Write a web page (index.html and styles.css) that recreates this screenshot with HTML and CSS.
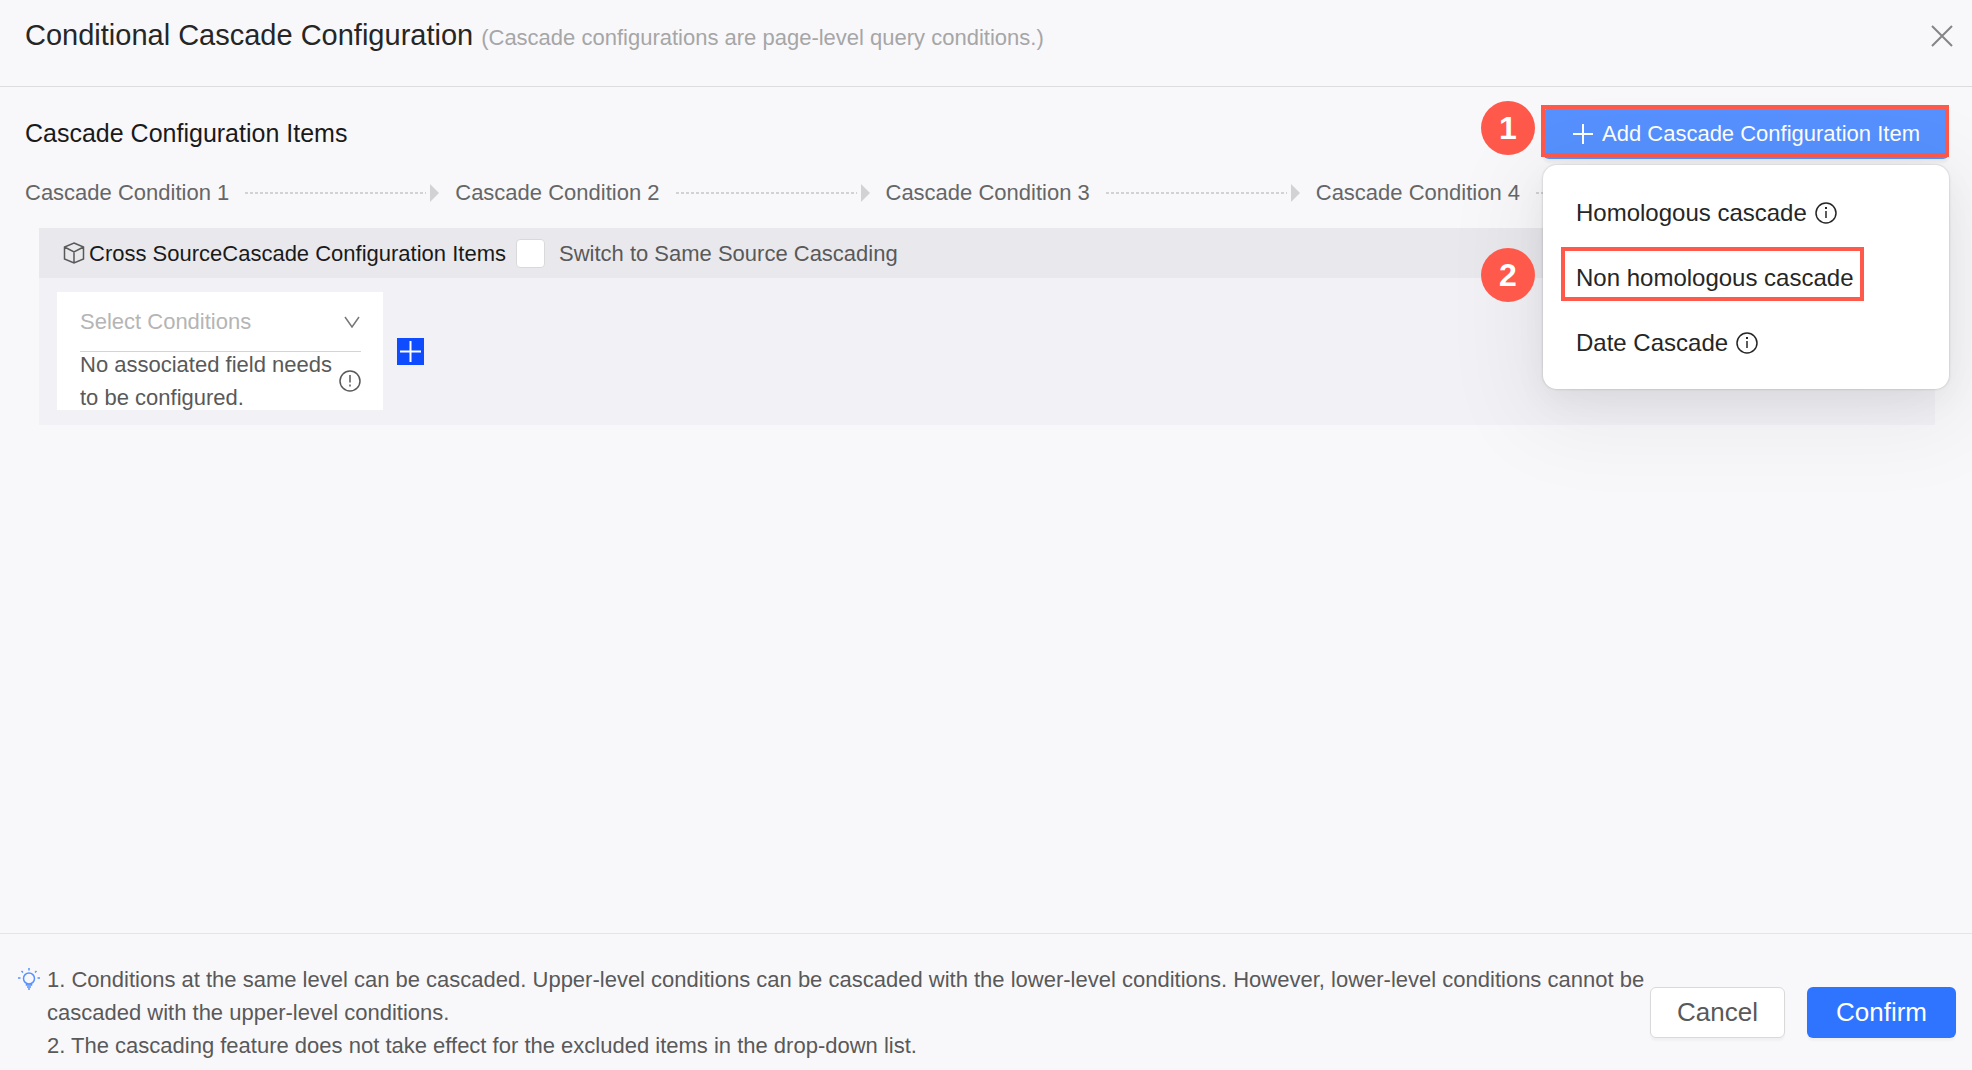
FILE: index.html
```html
<!DOCTYPE html>
<html lang="en">
<head>
    <meta charset="UTF-8">
    <title>Conditional Cascade Configuration</title>
    <link rel="stylesheet" href="styles.css">
</head>
<body>
    <div class="dialog">
        <header class="dialog-header">
            <h1>Conditional Cascade Configuration</h1>
            <span class="subtitle">(Cascade configurations are page-level query conditions.)</span>
            <button type="button" class="close" aria-label="Close">
                <svg width="22" height="22" viewBox="0 0 22 22"><path d="M1 1L21 21M21 1L1 21"/></svg>
            </button>
        </header>

        <main class="dialog-body">
            <div class="section-bar">
                <h2>Cascade Configuration Items</h2>
                <div class="add-wrapper">
                    <span class="badge badge-one">1</span>
                    <button type="button" class="add-button">
                        <svg width="22" height="22" viewBox="0 0 22 22"><path d="M11 1V21M1 11H21"/></svg>
                        Add Cascade Configuration Item
                    </button>
                    <!-- dropdown -->
                    <div class="menu">
                        <span class="badge badge-two">2</span>
                        <button type="button" class="menu-item">Homologous cascade
                            <svg width="22" height="22" viewBox="0 0 22 22"><circle cx="11" cy="11" r="10"/><path d="M11 9V16"/><path class="dot" d="M11 5V7"/></svg>
                        </button>
                        <button type="button" class="menu-item marked">Non homologous cascade</button>
                        <button type="button" class="menu-item">Date Cascade
                            <svg width="22" height="22" viewBox="0 0 22 22"><circle cx="11" cy="11" r="10"/><path d="M11 9V16"/><path class="dot" d="M11 5V7"/></svg>
                        </button>
                    </div>
                </div>
            </div>

            <div class="steps">
                <div class="step">Cascade Condition 1<span class="line"></span><span class="arrow"></span></div>
                <div class="step">Cascade Condition 2<span class="line"></span><span class="arrow"></span></div>
                <div class="step">Cascade Condition 3<span class="line"></span><span class="arrow"></span></div>
                <div class="step">Cascade Condition 4<span class="line"></span><span class="arrow"></span></div>
            </div>

            <section class="panel">
                <div class="panel-header">
                    <svg class="cube" width="22" height="22" viewBox="0 0 22 22"><path d="M11 1L20.500 5V17L11 21L1.500 17V5ZM1.500 5L11 10L20.500 5M11 10V21"/></svg>
                    <h3>Cross SourceCascade Configuration Items</h3>
                    <input type="checkbox" id="sameSource">
                    <label for="sameSource">Switch to Same Source Cascading</label>
                </div>
                <div class="panel-content">
                    <div class="card">
                        <div class="select-wrapper">
                            <select id="conditions" aria-label="Select Conditions">
                                <option>Select Conditions</option>
                            </select>
                            <svg class="chevron" width="18" height="12" viewBox="0 0 18 12"><path d="M2 1L9 11L16 1"/></svg>
                        </div>
                        <div class="note">
                            <p>No associated field needs to be configured.</p>
                            <svg width="22" height="22" viewBox="0 0 22 22"><circle cx="11" cy="11" r="10"/><path d="M11 5V12.500M11 14.500V16.500"/></svg>
                        </div>
                    </div>
                    <button type="button" class="plus-button" aria-label="Add condition">
                        <svg width="21" height="21" viewBox="0 0 21 21"><path d="M10.500 0V21M0 10.500H21"/></svg>
                    </button>
                </div>
            </section>
        </main>

        <footer class="dialog-footer">
            <svg class="bulb" width="22" height="22" viewBox="0 0 22 22"><circle cx="11" cy="10.500" r="5.500"/><path d="M8.500 15.500V17H13.500V15.500M9 19H13M10 21H12M11 0V2.500M0 10H2.500M19.500 10H22M3.500 3L5 4.500M18.500 3L17 4.500"/></svg>
            <div class="tips">
                <p>1. Conditions at the same level can be cascaded. Upper-level conditions can be cascaded with the lower-level conditions. However, lower-level conditions cannot be cascaded with the upper-level conditions.</p>
                <p>2. The cascading feature does not take effect for the excluded items in the drop-down list.</p>
            </div>
            <div class="actions">
                <button type="button" class="cancel">Cancel</button>
                <button type="button" class="confirm">Confirm</button>
            </div>
        </footer>
    </div>
</body>
</html>
```
FILE: styles.css
```css
* {
    box-sizing: border-box;
}
body {
    margin: 0;
    font-family: "Liberation Sans", Arial, sans-serif;
    font-size: 22px;
    line-height: 33px;
    color: #595959;
    background-color: #f8f8fb;
}
h1, h2, h3, p {
    margin: 0;
    font-weight: normal;
}
button {
    padding: 0;
    border: none;
    background: none;
    font-family: inherit;
    font-size: inherit;
    color: inherit;
    cursor: pointer;
}
svg {
    flex: none;
    display: block;
    fill: none;
    stroke: currentColor;
    stroke-width: 2;
}
.dialog {
    display: flex;
    flex-direction: column;
    min-height: 100vh;
    overflow: hidden;
}

/* header */
.dialog-header {
    display: flex;
    align-items: baseline;
    gap: 8px;
    padding: 18px 19px 32px 25px;
    border-bottom: 1px solid #dcdcdf;
}
h1 {
    font-size: 29px;
    line-height: 34px;
    color: #262626;
}
.subtitle {
    color: #a6a6a6;
}
.close {
    align-self: center;
    margin-left: auto;
    color: #858585;
}

/* body */
.dialog-body {
    flex: 1;
    padding: 21px 23px 40px 25px;
}
.section-bar {
    display: flex;
    justify-content: space-between;
    align-items: center;
}
h2 {
    font-size: 25px;
    color: #1a1a1a;
}
.add-wrapper {
    position: relative;
    z-index: 2;
    width: 406px;
}
.add-button {
    position: relative;
    display: flex;
    justify-content: center;
    align-items: center;
    gap: 8px;
    width: 100%;
    height: 51px;
    border-radius: 6px;
    background-color: #5691ff;
    box-shadow: 0 4px 2px rgba(0, 0, 0, 0.04);
    color: white;
}
.add-button::after {
    content: "";
    position: absolute;
    inset: -3px 0 2px -2px;
    border: 4px solid #ff594b;
}
.badge {
    position: absolute;
    width: 54px;
    height: 54px;
    border-radius: 50%;
    background-color: #ff594b;
    color: white;
    font-size: 32px;
    font-weight: bold;
    line-height: 54px;
    text-align: center;
}
.badge-one {
    top: -7px;
    left: -62px;
}
.badge-two {
    top: 83px;
    left: -62px;
}
.menu {
    position: absolute;
    top: 57px;
    left: 0;
    width: 100%;
    padding: 15px 33px 14px;
    border-radius: 14px;
    background-color: white;
    box-shadow: 0 0 2px 1px rgba(0, 0, 0, 0.1), 0 12px 32px rgba(0, 0, 0, 0.05), 0 18px 90px 20px rgba(0, 0, 0, 0.06);
}
.menu-item {
    position: relative;
    display: flex;
    align-items: center;
    gap: 8px;
    height: 65px;
    font-size: 24px;
    color: #262626;
}
.menu-item svg {
    stroke-width: 1.5;
}
.menu-item .dot {
    stroke-width: 2;
}
.marked::after {
    content: "";
    position: absolute;
    inset: 2px -10px 9px -15px;
    border: 4px solid #ff594b;
}

.steps {
    display: flex;
    gap: 16px;
    margin-top: 18px;
    line-height: 32px;
    color: #666;
}
.step {
    display: flex;
    align-items: center;
    gap: 4px;
    white-space: nowrap;
}
.line {
    width: 181px;
    height: 2px;
    margin-left: 12px;
    background: repeating-linear-gradient(to right, #d2d2d4 0 3px, transparent 3px 5px);
}
.arrow {
    border: 9px solid transparent;
    border-left-color: #d2d2d4;
    border-right: none;
}

.panel {
    margin: 19px 14px 0;
    background-color: #f1f1f6;
}
.panel-header {
    display: flex;
    align-items: center;
    height: 50px;
    padding-left: 24px;
    background-color: #e9e9ed;
}
.cube {
    stroke-width: 1.5;
}
h3 {
    margin: 0 10px 0 4px;
    font-size: 22px;
    color: #1a1a1a;
}
input[type="checkbox"] {
    appearance: none;
    width: 29px;
    height: 29px;
    margin: 0 14px 0 0;
    border: 1px solid #d9d9d9;
    border-radius: 4px;
    background-color: white;
}
.panel-content {
    display: flex;
    align-items: center;
    gap: 14px;
    padding: 14px 18px 15px;
}
.card {
    width: 326px;
    height: 118px;
    padding: 0 22px 0 23px;
    background-color: white;
}
.select-wrapper {
    display: flex;
    align-items: center;
    height: 60px;
    border-bottom: 1px solid #d4d4d4;
}
select {
    flex: 1;
    appearance: none;
    padding: 0;
    border: none;
    background: none;
    font-family: inherit;
    font-size: 22px;
    color: #b5b5b5;
}
.chevron {
    color: #777;
    stroke-width: 1.5;
}
.note {
    display: flex;
    justify-content: space-between;
    align-items: center;
    height: 58px;
}
.note p {
    width: 254px;
}
.note svg {
    stroke-width: 1.5;
}
.plus-button {
    padding: 3px;
    background-color: #0f4cff;
    color: white;
}

/* footer */
.dialog-footer {
    display: flex;
    align-items: center;
    padding: 29px 16px 8px 18px;
    border-top: 1px solid #e5e5e8;
}
.bulb {
    align-self: flex-start;
    margin: 5px 7px 0 0;
    color: #5691ff;
    stroke-width: 1.5;
}
.tips {
    flex: 1;
}
.actions {
    display: flex;
    gap: 22px;
}
.actions button {
    height: 51px;
    padding: 0 29px;
    border-radius: 6px;
    font-size: 26px;
    box-shadow: 0 3px 2px rgba(0, 0, 0, 0.03);
}
.actions .cancel {
    padding: 0 26px;
    border: 1px solid #d9d9d9;
    background-color: white;
}
.actions .confirm {
    background-color: #2e74ff;
    color: white;
}
```
